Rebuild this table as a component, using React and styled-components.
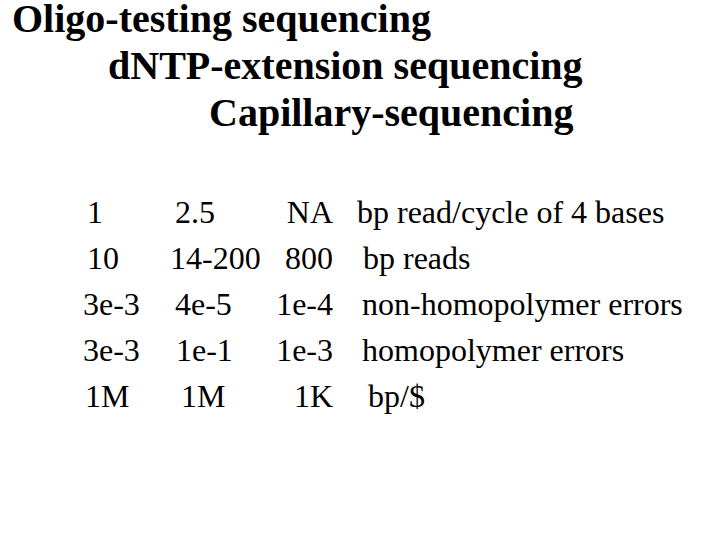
import React from 'react';
import styled, { createGlobalStyle } from 'styled-components';

const GlobalStyle = createGlobalStyle`
	html, body {
		margin: 0;
		padding: 0;
		background: #fff;
	}
	body {
		font-family: "Liberation Serif", "DejaVu Serif", serif;
		color: #000;
	}
`;

const Slide = styled.div`
	width: 720px;
	height: 540px;
	overflow: hidden;
	background: #fff;
	font-family: "Liberation Serif", "DejaVu Serif", serif;
`;

const Titles = styled.div`
	display: flex;
	flex-direction: column;
	gap: 9px;
	font-size: 40px;
	font-weight: bold;
	line-height: 38px;
`;

const TitleLine = styled.div`
	padding-left: ${p => p.$indent}px;
	white-space: nowrap;
`;

const Table = styled.div`
	margin-top: 57px;
	padding-left: 83px;
	font-size: 32px;
	line-height: 46px;
`;

const Row = styled.div`
	display: grid;
	grid-template-columns: 85px 105px 60px auto;
	white-space: nowrap;
`;

const Cell = styled.div`
	padding-left: ${p => p.$indent || 0}px;
	text-align: ${p => (p.$right ? 'right' : 'left')};
`;

const titles = [
	{ text: 'Oligo-testing sequencing', indent: 12 },
	{ text: 'dNTP-extension sequencing', indent: 108 },
	{ text: 'Capillary-sequencing', indent: 209 },
];

const rows = [
	{ a: '1', ai: 4, b: '2.5', bi: 7, c: 'NA', d: 'bp read/cycle of 4 bases', di: 24 },
	{ a: '10', ai: 4, b: '14-200', bi: 2, c: '800', d: 'bp reads', di: 30 },
	{ a: '3e-3', ai: 0, b: '4e-5', bi: 7, c: '1e-4', d: 'non-homopolymer errors', di: 29 },
	{ a: '3e-3', ai: 0, b: '1e-1', bi: 8, c: '1e-3', d: 'homopolymer errors', di: 29 },
	{ a: '1M', ai: 2, b: '1M', bi: 13, c: '1K', d: 'bp/$', di: 35 },
];

const App = () => {
	return (
		<Slide>
			<GlobalStyle />
			<Titles>
				{titles.map(t => (
					<TitleLine key={t.text} $indent={t.indent}>
						{t.text}
					</TitleLine>
				))}
			</Titles>
			<Table>
				{rows.map((r, i) => (
					<Row key={i}>
						<Cell $indent={r.ai}>{r.a}</Cell>
						<Cell $indent={r.bi}>{r.b}</Cell>
						<Cell $right>{r.c}</Cell>
						<Cell $indent={r.di}>{r.d}</Cell>
					</Row>
				))}
			</Table>
		</Slide>
	);
};

export default App;
